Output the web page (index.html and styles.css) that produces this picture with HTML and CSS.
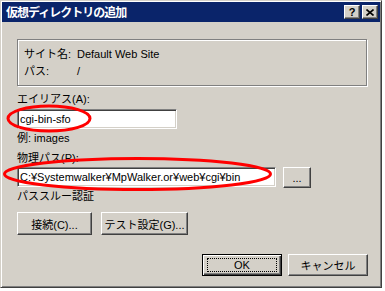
FILE: index.html
```html
<!DOCTYPE html>
<html lang="ja">
<head>
  <meta charset="UTF-8" />
  <title>仮想ディレクトリの追加</title>
  <link rel="stylesheet" href="styles.css">
</head>
<body>
  <div class="window">
    <div class="title-bar">
      <span class="title-text">仮想ディレクトリの追加</span>
      <div class="title-btns">
        <button class="caption-btn help">?</button>
        <button class="caption-btn close">
          <svg width="8" height="7" viewBox="0 0 8 7"><path d="M0.5 0.5 L7.5 6.5 M7.5 0.5 L0.5 6.5" stroke="#000" stroke-width="1.6" fill="none"/></svg>
        </button>
      </div>
    </div>
    <div class="dialog-body">
      <div class="group-box">
        <span>サイト名:</span><span>Default Web Site</span>
        <span>パス:</span><span>/</span>
      </div>
      <div class="label gap-top">エイリアス(A):</div>
      <div class="edit alias">cgi-bin-sfo</div>
      <div class="label ex">例: images</div>
      <div class="label phys">物理パス(P):</div>
      <div class="path-row">
        <div class="edit path">C:¥Systemwalker¥MpWalker.or¥web¥cgi¥bin</div>
        <button class="btn browse">...</button>
      </div>
      <div class="label">パススルー認証</div>
      <div class="btn-row">
        <button class="btn connect">接続(C)...</button>
        <button class="btn test">テスト設定(G)...</button>
      </div>
      <div class="footer">
        <button class="btn default"><span class="focus">OK</span></button>
        <button class="btn">キャンセル</button>
      </div>
    </div>
  </div>
  <svg class="marks" width="385" height="291">
    <ellipse cx="49" cy="118.5" rx="41" ry="12.5" fill="none" stroke="#f00" stroke-width="3"/>
    <ellipse cx="137.5" cy="174" rx="133" ry="15.5" fill="none" stroke="#f00" stroke-width="3"/>
  </svg>
</body>
</html>
```
FILE: styles.css
```css
* { margin:0; padding:0; box-sizing:border-box; }
body { background:#fff; font-family:"Liberation Sans","Noto Sans CJK JP",sans-serif; font-size:11px; color:#000; position:relative; width:385px; height:291px; overflow:hidden; }
.window { width:382px; height:288px; background:#d4d0c8; border:1px solid; border-color:#d4d0c8 #404040 #404040 #d4d0c8; box-shadow:inset 1px 1px #fff, inset -1px -1px #808080; padding:1px; }
.title-bar { height:20px; background:#0a246a; display:flex; align-items:center; justify-content:space-between; padding:0 2px 0 4px; }
.title-text { color:#fff; font-family:"Noto Sans CJK JP",sans-serif; font-weight:bold; font-size:12px; letter-spacing:-1px; line-height:20px; }
.title-btns { display:flex; gap:2px; }
.caption-btn { width:16px; height:14px; background:#d4d0c8; border:1px solid; border-color:#fff #404040 #404040 #fff; box-shadow:inset -1px -1px #808080; display:flex; align-items:center; justify-content:center; font-family:"Liberation Sans",sans-serif; font-weight:bold; font-size:11px; line-height:12px; color:#000; }
.dialog-body { padding:17px 13px 0 15px; display:flex; flex-direction:column; align-items:flex-start; }
.group-box { width:350px; height:47px; border:1px solid #808080; box-shadow:inset 1px 1px #fff, 1px 1px #fff; padding:6px 6px; display:grid; grid-template-columns:53px 1fr; line-height:16px; }
.label { line-height:16px; height:16px; white-space:nowrap; }
.gap-top { margin-top:5px; }
.edit { background:#fff; height:20px; border:1px solid; border-color:#808080 #fff #fff #808080; box-shadow:inset 1px 1px #404040, inset -1px -1px #d4d0c8; padding:0 2px; line-height:18px; white-space:nowrap; overflow:hidden; }
.alias { width:160px; margin-top:2px; }
.ex { margin-top:1px; }
.phys { margin-top:4px; }
.path-row { display:flex; gap:7px; margin-top:1px; align-items:flex-start; }
.path { width:259px; }
.btn { background:#d4d0c8; border:1px solid; border-color:#fff #404040 #404040 #fff; box-shadow:inset -1px -1px #808080; font-family:inherit; font-size:11px; color:#000; display:flex; align-items:center; justify-content:center; height:23px; width:80px; white-space:nowrap; }
.browse { width:28px; height:21px; }
.btn-row { display:flex; gap:9px; margin-top:8px; }
.connect { width:75px; }
.test { width:87px; }
.footer { display:flex; gap:6px; margin-top:19px; align-self:flex-end; margin-right:-1px; }
.footer .btn { height:22px; }
.default { border:1px solid #000; box-shadow:inset 1px 1px #fff, inset -1px -1px #404040, inset -2px -2px #808080; }
.focus { display:flex; align-items:center; justify-content:center; width:70px; height:14px; border:1px dotted #000; }
.marks { position:absolute; left:0; top:0; pointer-events:none; }
```
